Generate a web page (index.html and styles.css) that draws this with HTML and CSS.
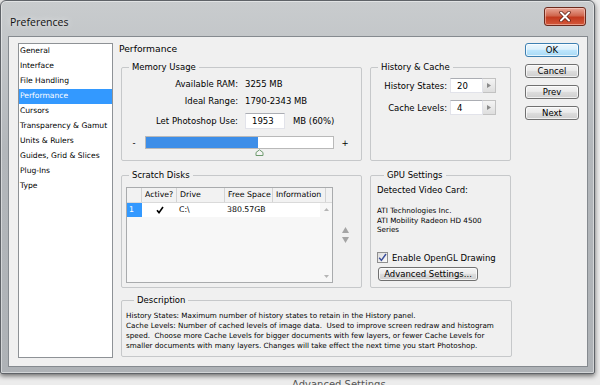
FILE: index.html
```html
<!DOCTYPE html>
<html lang="en">
<head>
    <meta charset="UTF-8">
    <title>Preferences</title>
    <link rel="stylesheet" href="styles.css">
</head>
<body>

    <!-- Dialog window -->
    <div class="window">
        <div class="titlebar">
            <span class="title">Preferences</span>
            <div class="close-btn">
                <svg width="12" height="11" viewBox="0 0 12 11">
                    <path d="M2 1.5 L10 9.5 M10 1.5 L2 9.5" stroke="#5a1d12" stroke-width="3.4" stroke-linecap="round"/>
                    <path d="M2 1.5 L10 9.5 M10 1.5 L2 9.5" stroke="#fff" stroke-width="2" stroke-linecap="round"/>
                </svg>
            </div>
        </div>

        <div class="client">
            <!-- Category list -->
            <ul class="nav">
                <li>General</li>
                <li>Interface</li>
                <li>File Handling</li>
                <li class="selected">Performance</li>
                <li>Cursors</li>
                <li>Transparency &amp; Gamut</li>
                <li>Units &amp; Rulers</li>
                <li>Guides, Grid &amp; Slices</li>
                <li>Plug-Ins</li>
                <li>Type</li>
            </ul>

            <div class="main">
                <div class="page-title">Performance</div>

                <div class="groups">
                    <!-- Memory Usage -->
                    <fieldset class="group">
                        <legend>Memory Usage</legend>
                        <div class="mem-rows">
                            <div class="kv"><span class="k">Available RAM:</span><span class="v">3255 MB</span></div>
                            <div class="kv"><span class="k">Ideal Range:</span><span class="v">1790-2343 MB</span></div>
                            <div class="kv input-row">
                                <span class="k">Let Photoshop Use:</span>
                                <span class="v textbox mem-box">1953</span>
                                <span class="unit">MB (60%)</span>
                            </div>
                        </div>
                        <div class="slider-row">
                            <span class="pm">-</span>
                            <div class="slider">
                                <div class="slider-fill"></div>
                                <svg class="thumb" width="9" height="7" viewBox="0 0 9 7">
                                    <path d="M1 6.5 L1 3.5 L4.5 0.8 L8 3.5 L8 6.5 Z" fill="#f4f4f4" stroke="#6e9a6e" stroke-width="1"/>
                                </svg>
                            </div>
                            <span class="pm">+</span>
                        </div>
                    </fieldset>

                    <!-- History & Cache -->
                    <fieldset class="group">
                        <legend>History &amp; Cache</legend>
                        <div class="spin-row first">
                            <span class="k">History States:</span>
                            <span class="textbox spin-box">20</span>
                            <span class="spin-btn"><svg width="4" height="5" viewBox="0 0 4 5"><path d="M0 0 L4 2.5 L0 5 Z" fill="#8a8a8a"/></svg></span>
                        </div>
                        <div class="spin-row">
                            <span class="k">Cache Levels:</span>
                            <span class="textbox spin-box">4</span>
                            <span class="spin-btn"><svg width="4" height="5" viewBox="0 0 4 5"><path d="M0 0 L4 2.5 L0 5 Z" fill="#8a8a8a"/></svg></span>
                        </div>
                    </fieldset>

                    <!-- Scratch Disks -->
                    <fieldset class="group">
                        <legend>Scratch Disks</legend>
                        <div class="scratch-body">
                            <div class="disk-table">
                                <div class="disk-head">
                                    <span class="c-num"></span>
                                    <span class="c-act">Active?</span>
                                    <span class="c-drv">Drive</span>
                                    <span class="c-free">Free Space</span>
                                    <span class="c-info">Information</span>
                                </div>
                                <div class="disk-body">
                                    <div class="disk-rows">
                                        <div class="disk-row">
                                            <span class="c-num sel">1</span>
                                            <span class="c-act check">
                                                <svg width="8" height="8" viewBox="0 0 8 8"><path d="M1 4.2 L3 6.6 L7 1" fill="none" stroke="#000" stroke-width="1.6"/></svg>
                                            </span>
                                            <span class="c-drv">C:\</span>
                                            <span class="c-free">380.57GB</span>
                                        </div>
                                    </div>
                                    <div class="disk-scroll">
                                        <svg width="5" height="3" viewBox="0 0 5 3"><path d="M0 3 L2.5 0 L5 3 Z" fill="#b5b5b5"/></svg>
                                        <svg width="5" height="3" viewBox="0 0 5 3"><path d="M0 0 L2.5 3 L5 0 Z" fill="#b5b5b5"/></svg>
                                    </div>
                                </div>
                            </div>
                            <div class="disk-move">
                                <svg width="7" height="6" viewBox="0 0 7 6"><path d="M0 6 L3.5 0 L7 6 Z" fill="#a4a4a4"/></svg>
                                <svg width="7" height="6" viewBox="0 0 7 6"><path d="M0 0 L3.5 6 L7 0 Z" fill="#a4a4a4"/></svg>
                            </div>
                        </div>
                    </fieldset>

                    <!-- GPU Settings -->
                    <fieldset class="group gpu">
                        <legend>GPU Settings</legend>
                        <div class="gpu-label">Detected Video Card:</div>
                        <div class="gpu-card">
                            ATI Technologies Inc.<br>
                            ATI Mobility Radeon HD 4500<br>
                            Series
                        </div>
                        <div class="check-row">
                            <span class="checkbox">
                                <svg width="9" height="9" viewBox="0 0 9 9"><path d="M1.2 4.8 L3.4 7.4 L8 1" fill="none" stroke="#3a4e9a" stroke-width="1.5"/></svg>
                            </span>
                            <span>Enable OpenGL Drawing</span>
                        </div>
                        <div class="btn adv-btn">Advanced Settings...</div>
                    </fieldset>
                </div>

                <!-- Description -->
                <fieldset class="group desc">
                    <legend>Description</legend>
                    <p>History States: Maximum number of history states to retain in the History panel.</p>
                    <p>Cache Levels: Number of cached levels of image data.&nbsp; Used to improve screen redraw and histogram<br>speed.&nbsp; Choose more Cache Levels for bigger documents with few layers, or fewer Cache Levels for<br>smaller documents with many layers. Changes will take effect the next time you start Photoshop.</p>
                </fieldset>
            </div>

            <!-- Dialog buttons -->
            <div class="buttons">
                <div class="btn default">OK</div>
                <div class="btn">Cancel</div>
                <div class="btn">Prev</div>
                <div class="btn">Next</div>
            </div>
        </div>
    </div>

    <div class="behind">Advanced Settings</div>

</body>
</html>
```

FILE: styles.css
```css
/* General Styles */
* {
    margin: 0;
    padding: 0;
    box-sizing: border-box;
}
body {
    width: 600px;
    height: 385px;
    overflow: hidden;
    background: #ececec;
    color: #000;
    font-family: "DejaVu Sans", Tahoma, sans-serif;
    font-size: 8.5px;
}

/* Window frame */
.window {
    position: relative;
    z-index: 1;
    width: 595px;
    height: 374px;
    display: flex;
    flex-direction: column;
    padding: 0 6px 6px 7px;
    background: linear-gradient(#c9ccce, #b3b7bb 40%, #aeb2b6);
    border: 1px solid #5f6368;
    border-radius: 6px 6px 2px 2px;
    box-shadow: inset 0 0 0 1px rgba(255, 255, 255, 0.45), 0 2px 5px rgba(0, 0, 0, 0.55);
}
.titlebar {
    height: 35px;
    display: flex;
    justify-content: space-between;
    align-items: flex-start;
    margin: 0 -6px 0 -7px;
    padding: 0 8px 0 9px;
}
.title {
    padding-top: 15px;
    font-family: "Open Sans", sans-serif;
    font-size: 10.5px;
    line-height: 13px;
    color: #111;
    text-shadow: 0 0 6px rgba(255, 255, 255, 0.9);
}
.close-btn {
    width: 42px;
    height: 19px;
    margin-top: 6px;
    display: flex;
    justify-content: center;
    align-items: center;
    background: linear-gradient(#e9a798, #d0674e 45%, #c23a1f 55%, #d4583a);
    border: 1px solid #6c2a1d;
    border-radius: 3px;
    box-shadow: inset 0 0 0 1px rgba(255, 220, 210, 0.5);
}

/* Client area */
.client {
    flex: 1;
    display: flex;
    padding: 6px 8px 8px 9px;
    background: #f0f0f0;
    border: 1px solid #858a8f;
}

/* Category list */
.nav {
    width: 95px;
    list-style: none;
    background: #fff;
    border: 1px solid #8e9296;
    font-size: 7.6px;
}
.nav li {
    height: 15px;
    line-height: 14px;
    padding-left: 1px;
    white-space: nowrap;
}
.nav li.selected {
    background: #3399ff;
    color: #fff;
}

/* Main panel */
.main {
    width: 393px;
    margin-left: 6px;
}
.page-title {
    height: 11px;
    line-height: 11px;
    margin-bottom: 7px;
    font-size: 9.2px;
}
.groups {
    display: grid;
    grid-template-columns: 241px 141px;
    grid-template-rows: 100px 119px;
    column-gap: 8px;
    row-gap: 8px;
    padding-left: 2px;
}
.group {
    min-width: 0;
    padding: 0;
    border: 1px solid #c6c8ca;
    border-radius: 2px;
}
.group legend {
    margin-left: 7px;
    padding: 0 3px;
    font-size: 8.5px;
    line-height: 12px;
}

/* Memory Usage */
.mem-rows {
    padding-top: 2px;
}
.kv {
    display: flex;
    align-items: center;
    height: 17px;
}
.kv .k {
    width: 116px;
    text-align: right;
}
.kv .v {
    margin-left: 7px;
}
.kv.input-row {
    height: 18px;
    margin-top: 3px;
}
.textbox {
    display: flex;
    align-items: center;
    height: 16px;
    padding-left: 6px;
    background: #fff;
    border: 1px solid #e2e3ea;
    border-top-color: #abadb3;
}
.mem-box {
    width: 40px;
}
.unit {
    margin-left: 8px;
}
.slider-row {
    display: flex;
    align-items: center;
    height: 13px;
    margin-top: 6px;
    padding-left: 8px;
}
.pm {
    width: 8px;
    text-align: center;
}
.slider {
    position: relative;
    width: 189px;
    height: 13px;
    margin: 0 7px;
    background: #fff;
    border: 1px solid #b9b9b9;
}
.slider-fill {
    width: 60%;
    height: 100%;
    background: #3d8ee8;
}
.thumb {
    position: absolute;
    left: 109px;
    top: 12px;
}

/* History & Cache */
.spin-row {
    display: flex;
    align-items: center;
    height: 15px;
    margin-top: 7px;
}
.spin-row.first {
    margin-top: 5px;
}
.spin-row .k {
    width: 76px;
    margin-right: 3px;
    text-align: right;
}
.spin-box {
    width: 33px;
    height: 15px;
}
.spin-btn {
    width: 13px;
    height: 15px;
    display: flex;
    justify-content: center;
    align-items: center;
    background: linear-gradient(#f4f4f4, #dedede);
    border: 1px solid #c2c2c2;
    border-left: none;
}

/* Scratch Disks */
.scratch-body {
    display: flex;
    align-items: center;
    margin: 6px 0 0 4px;
}
.disk-table {
    width: 207px;
    height: 96px;
    display: flex;
    flex-direction: column;
    background: #f7f7f7;
    border: 1px solid #a9abad;
    font-size: 7.8px;
}
.disk-head {
    display: flex;
    height: 15px;
    background: #f2f2f2;
    border-bottom: 1px solid #dadada;
}
.disk-head span {
    line-height: 14px;
    padding-left: 3px;
    border-right: 1px solid #d3d3d3;
}
.c-num { width: 15px; }
.c-act { width: 35px; }
.c-drv { width: 48px; }
.c-free { width: 48px; }
.c-info { width: 53px; }
.disk-body {
    flex: 1;
    display: flex;
}
.disk-rows {
    width: 193px;
}
.disk-row {
    display: flex;
    height: 14px;
    line-height: 13px;
    background: #fff;
}
.disk-row span {
    padding-left: 2px;
}
.disk-row .sel {
    background: #3399ff;
    color: #fff;
}
.disk-row .check {
    display: flex;
    align-items: center;
    padding-left: 14px;
}
.disk-scroll {
    flex: 1;
    display: flex;
    flex-direction: column;
    justify-content: space-between;
    align-items: center;
    padding: 5px 0 4px;
}
.disk-move {
    display: flex;
    flex-direction: column;
    gap: 4px;
    margin-left: 9px;
}

/* GPU Settings */
.gpu {
    padding: 4px 0 0 6px;
}
.gpu-label {
    line-height: 11px;
}
.gpu-card {
    margin-top: 10px;
    font-size: 7.2px;
    line-height: 9.5px;
}
.check-row {
    display: flex;
    align-items: center;
    height: 12px;
    margin-top: 17px;
}
.checkbox {
    width: 11px;
    height: 11px;
    margin-right: 4px;
    display: flex;
    justify-content: center;
    align-items: center;
    background: linear-gradient(135deg, #dcdcdc, #fbfbfb);
    border: 1px solid #8f8f8f;
}
.adv-btn {
    width: 100px;
    margin: 3px 0 0 1px;
}

/* Description */
.desc {
    height: 63px;
    margin: 6px 0 0 2px;
    padding: 5px 4px 0 4px;
    font-size: 7.2px;
    line-height: 10px;
    white-space: nowrap;
}
.desc legend {
    margin-left: 8px;
}

/* Buttons */
.buttons {
    width: 54px;
    margin-left: 13px;
}
.btn {
    height: 14px;
    margin-bottom: 7px;
    display: flex;
    justify-content: center;
    align-items: center;
    background: linear-gradient(#f3f3f3, #ebebeb 45%, #dddddd 50%, #cfcfcf);
    border: 1px solid #707070;
    border-radius: 3px;
    box-shadow: inset 0 0 0 1px rgba(255, 255, 255, 0.7);
}
.btn.default {
    background: linear-gradient(#ecf7fd, #dbf0fc 45%, #bee6fd 50%, #a7d9f5);
    border-color: #3c7fb1;
}

/* Window behind */
.behind {
    margin: 5px 0 0 292px;
    font-size: 10px;
    line-height: 12px;
    color: #555;
}
```
